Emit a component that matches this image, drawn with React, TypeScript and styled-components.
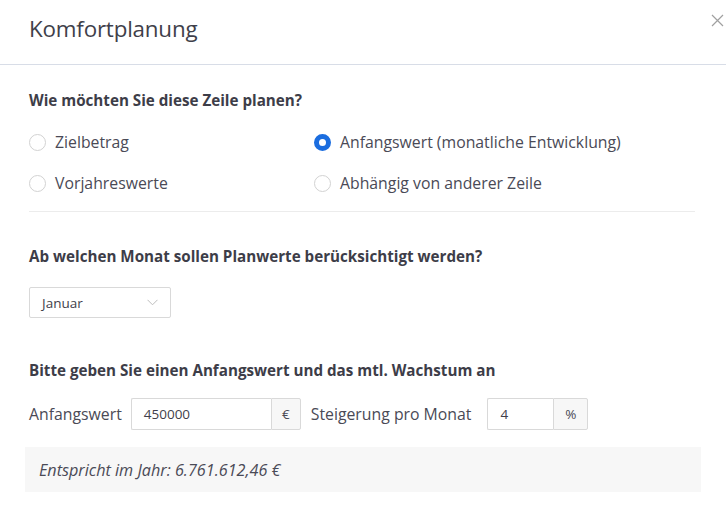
import React from "react";
import styled, { createGlobalStyle } from "styled-components";

const GlobalStyle = createGlobalStyle`
  html, body {
    margin: 0;
    padding: 0;
    background: #ffffff;
  }
  body {
    font-family: "Open Sans", "Noto Sans", Arial, sans-serif;
    color: #4a4a55;
  }
`;

type Option = { label: string; checked?: boolean };

const options: Option[] = [
  { label: "Zielbetrag" },
  { label: "Anfangswert (monatliche Entwicklung)", checked: true },
  { label: "Vorjahreswerte" },
  { label: "Abhängig von anderer Zeile" },
];

export default function App() {
  return (
    <>
      <GlobalStyle />
      <Modal>
        {/* Header */}
        <Header>
          <Title>Komfortplanung</Title>
          <CloseButton aria-label="Schließen">
            <svg width="13" height="13" viewBox="0 0 13 13">
              <path d="M1 1 L12 12 M12 1 L1 12" stroke="#a0a0a0" strokeWidth="1.2" fill="none" />
            </svg>
          </CloseButton>
        </Header>

        <Body>
          <Heading>Wie möchten Sie diese Zeile planen?</Heading>
          <RadioGrid>
            {options.map((o) => (
              <RadioRow key={o.label}>
                <RadioCircle $checked={!!o.checked} />
                <RadioLabel>{o.label}</RadioLabel>
              </RadioRow>
            ))}
          </RadioGrid>
          <Divider />

          <Heading $top={34}>Ab welchen Monat sollen Planwerte berücksichtigt werden?</Heading>
          <Select>
            <span>Januar</span>
            <svg width="11" height="7" viewBox="0 0 11 7">
              <path d="M0.5 0.8 L5.5 5.8 L10.5 0.8" stroke="#bdbdbd" strokeWidth="1" fill="none" />
            </svg>
          </Select>

          <Heading $top={42}>Bitte geben Sie einen Anfangswert und das mtl. Wachstum an</Heading>
          <InputRow>
            <FieldLabel>Anfangswert</FieldLabel>
            <InputGroup>
              <TextInput $width={140}>450000</TextInput>
              <Addon $width={30}>€</Addon>
            </InputGroup>
            <FieldLabel $left={10}>Steigerung pro Monat</FieldLabel>
            <InputGroup $left={7}>
              <TextInput $width={66}>4</TextInput>
              <Addon $width={35}>%</Addon>
            </InputGroup>
          </InputRow>

          <InfoBox>Entspricht im Jahr: 6.761.612,46 €</InfoBox>
        </Body>
      </Modal>
    </>
  );
}

// Styled Components

const Modal = styled.div`
  width: 726px;
  height: 511px;
  background: #fff;
  overflow: hidden;
`;

const Header = styled.header`
  height: 65px;
  display: flex;
  justify-content: space-between;
  align-items: flex-start;
  padding: 0 2px 0 29px;
  border-bottom: 1px solid #d8dde7;
  box-sizing: border-box;
`;

const Title = styled.h1`
  margin: 15px 0 0;
  font-size: 22.4px;
  font-weight: 400;
  line-height: 28px;
  color: #3f3f4a;
  letter-spacing: -0.2px;
`;

const CloseButton = styled.button`
  margin-top: 14px;
  padding: 0;
  border: none;
  background: none;
  display: flex;
  cursor: pointer;
`;

const Body = styled.div`
  display: flex;
  flex-direction: column;
  align-items: flex-start;
  padding: 25px 31px 0 29px;
`;

const Heading = styled.h2<{ $top?: number }>`
  margin: ${(p) => p.$top ?? 0}px 0 0;
  font-size: 15.2px;
  font-weight: 700;
  line-height: 20px;
  color: #3d3d48;
`;

const RadioGrid = styled.div`
  display: grid;
  grid-template-columns: 285px 1fr;
  row-gap: 17px;
  margin-top: 20px;
  align-self: stretch;
`;

const RadioRow = styled.label`
  display: flex;
  align-items: center;
  gap: 9px;
  height: 24px;
  cursor: pointer;
`;

const RadioCircle = styled.span<{ $checked: boolean }>`
  width: 17px;
  height: 17px;
  box-sizing: border-box;
  border-radius: 50%;
  background: #fff;
  border: ${(p) => (p.$checked ? "5px solid #1b6ddf" : "1px solid #d2d2d2")};
  flex-shrink: 0;
`;

const RadioLabel = styled.span`
  font-size: 15.8px;
  color: #4a4a56;
`;

const Divider = styled.hr`
  align-self: stretch;
  margin: 16px 0 0;
  border: none;
  border-top: 1px solid #ececec;
`;

const Select = styled.div`
  margin-top: 21px;
  width: 142px;
  height: 31px;
  box-sizing: border-box;
  border: 1px solid #d9d9d9;
  border-radius: 2px;
  display: flex;
  align-items: center;
  justify-content: space-between;
  padding: 0 12px 0 12px;
  font-size: 13.5px;
  color: #3f3f4a;
`;

const InputRow = styled.div`
  display: flex;
  align-items: center;
  margin-top: 18px;
`;

const FieldLabel = styled.span<{ $left?: number }>`
  font-size: 15.8px;
  color: #4a4a56;
  margin-left: ${(p) => p.$left ?? 0}px;
  margin-right: 9px;
`;

const InputGroup = styled.div<{ $left?: number }>`
  display: flex;
  height: 32px;
  margin-left: ${(p) => p.$left ?? 0}px;
`;

const TextInput = styled.div<{ $width: number }>`
  width: ${(p) => p.$width}px;
  box-sizing: border-box;
  border: 1px solid #d9d9d9;
  border-right: none;
  border-radius: 2px 0 0 2px;
  display: flex;
  align-items: center;
  padding: 0 12px;
  font-size: 13.5px;
  color: #3f3f4a;
`;

const Addon = styled.div<{ $width: number }>`
  width: ${(p) => p.$width}px;
  box-sizing: border-box;
  border: 1px solid #d9d9d9;
  border-radius: 0 2px 2px 0;
  background: #f7f7f7;
  display: flex;
  align-items: center;
  justify-content: center;
  font-size: 13.5px;
  color: #4a4a56;
`;

const InfoBox = styled.div`
  margin: 17px -6px 0 -4px;
  align-self: stretch;
  height: 45px;
  background: #f7f7f7;
  display: flex;
  align-items: center;
  padding-left: 14px;
  font-size: 16.2px;
  font-style: italic;
  color: #4a4a56;
`;
